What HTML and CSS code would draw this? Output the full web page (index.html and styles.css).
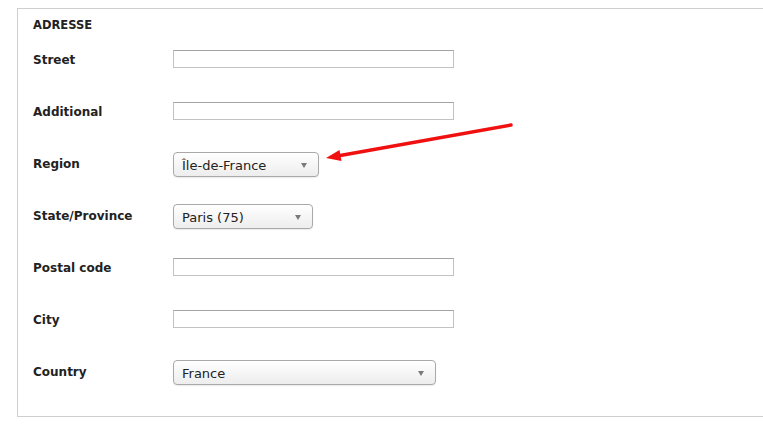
FILE: index.html
```html
<!DOCTYPE html>
<html>
<head>
<meta charset="utf-8">
<link rel="stylesheet" href="styles.css">
</head>
<body>
<div class="page">
  <section class="box">
    <h2 class="legend">ADRESSE</h2>
    <div class="form">
      <div class="row"><label class="lbl">Street</label><div class="field"><span class="input"></span></div></div>
      <div class="row"><label class="lbl">Additional</label><div class="field"><span class="input"></span></div></div>
      <div class="row"><label class="lbl">Region</label><div class="field"><div class="select w-region"><span class="val">Île-de-France</span><span class="caret"></span></div></div></div>
      <div class="row"><label class="lbl">State/Province</label><div class="field"><div class="select w-state"><span class="val">Paris (75)</span><span class="caret"></span></div></div></div>
      <div class="row"><label class="lbl">Postal code</label><div class="field"><span class="input"></span></div></div>
      <div class="row"><label class="lbl">City</label><div class="field"><span class="input"></span></div></div>
      <div class="row"><label class="lbl">Country</label><div class="field"><div class="select w-country"><span class="val">France</span><span class="caret"></span></div></div></div>
    </div>
  </section>
  <svg class="arrow" width="763" height="426" viewBox="0 0 763 426">
    <line x1="511" y1="125" x2="336" y2="156.3" stroke="#f01010" stroke-width="3.5" stroke-linecap="round"/>
    <polygon points="326,158 341.5,161 339.5,150" fill="#f01010"/>
  </svg>
</div>
</body>
</html>
```
FILE: styles.css
```css
html, body {
  margin: 0;
  padding: 0;
  background: #fff;
  overflow: hidden;
}
.page {
  position: relative;
  width: 763px;
  height: 426px;
  padding: 8px 0 0 17px;
  box-sizing: border-box;
  font-family: "DejaVu Sans", "Liberation Sans", sans-serif;
  color: #222;
}
.box {
  width: 746px;
  border: 1px solid #cfcfcf;
  border-right: none;
  padding: 8px 0 18px 15px;
  box-sizing: border-box;
}
.legend {
  margin: 0;
  font-size: 11.5px;
  font-weight: bold;
  line-height: 16px;
  color: #222;
}
.form {
  display: flex;
  flex-direction: column;
  margin-top: 1px;
}
.row {
  display: grid;
  grid-template-columns: 140px 1fr;
  align-items: center;
  height: 52px;
}
.lbl {
  font-size: 12px;
  font-weight: bold;
  color: #222;
}
.field {
  display: flex;
  align-items: center;
}
.input {
  display: block;
  width: 281px;
  height: 18px;
  box-sizing: border-box;
  border: 1px solid #c2c2c2;
  border-top-color: #a2a2a2;
  background: #fff;
  margin-top: -2px;
}
.select {
  position: relative;
  display: flex;
  align-items: center;
  height: 25px;
  box-sizing: border-box;
  border: 1px solid #a9a9a9;
  border-radius: 4px;
  background: linear-gradient(#ffffff, #ededed);
  box-shadow: 0 1px 1px rgba(0,0,0,0.08);
  padding-left: 8px;
  font-size: 13px;
  color: #222;
}
.w-region { width: 146px; }
.w-state { width: 140px; }
.w-country { width: 263px; }
.val { line-height: 25px; padding-top: 2px; }
.caret {
  position: absolute;
  right: 11px;
  top: 10px;
  width: 0;
  height: 0;
  border-left: 3.5px solid transparent;
  border-right: 3.5px solid transparent;
  border-top: 5px solid #7a7a7a;
}
.arrow {
  position: absolute;
  left: 0;
  top: 0;
  pointer-events: none;
}
```
